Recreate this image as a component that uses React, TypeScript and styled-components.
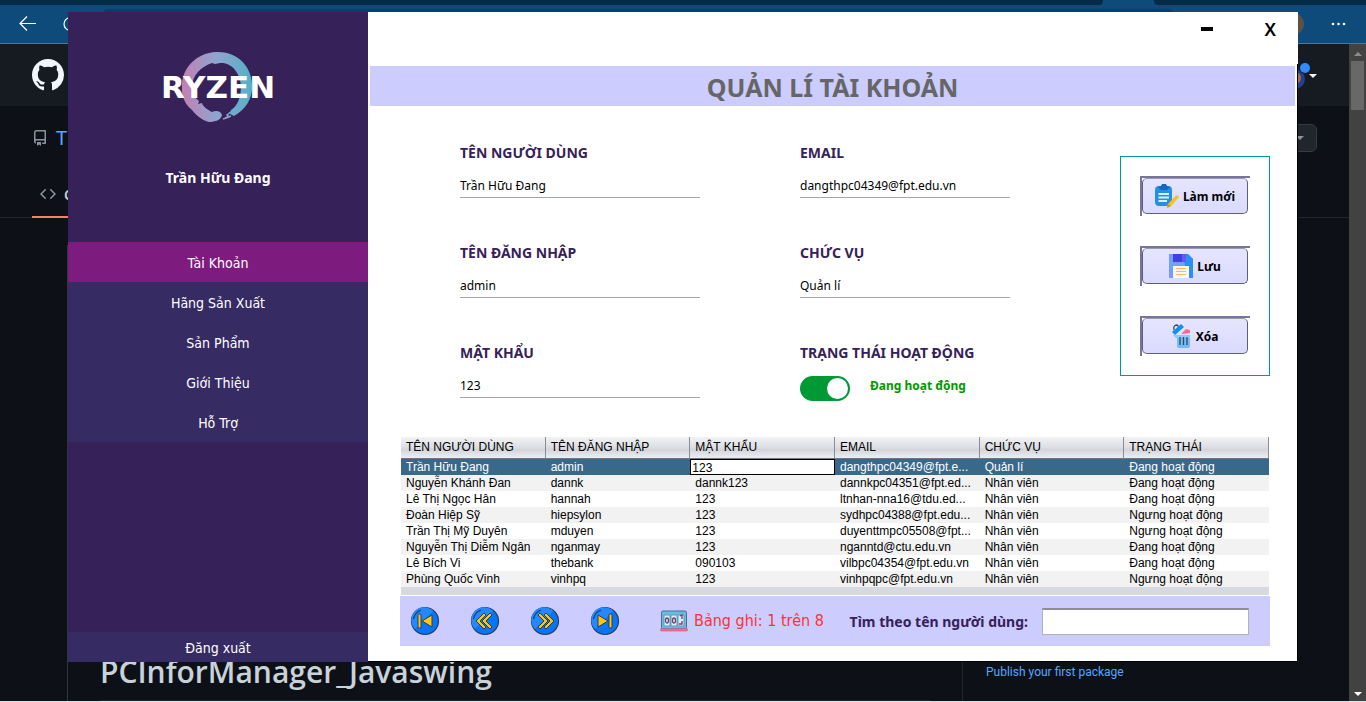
import React, { useState } from "react";
import styled, { createGlobalStyle, css } from "styled-components";

const uiFont = `"DejaVu Sans Condensed", "DejaVu Sans", sans-serif`;
const tahoma = `"Noto Sans", "Open Sans", sans-serif`;
const tableFont = `"Liberation Sans", Arial, sans-serif`;

const GlobalStyle = createGlobalStyle`
  *, *::before, *::after { box-sizing: border-box; }
  body { margin: 0; background: #0d1117; overflow: hidden; }
  button, input { font: inherit; }
`;

/* ---------- browser behind the application window ---------- */

const Desktop = styled.div`
  position: relative;
  display: flex;
  flex-direction: column;
  height: 100vh;
  background: #0d1117;
  border-bottom: 1px solid #d5e5e6;
  font-family: ${tahoma};
`;

const TabStrip = styled.div`
  display: flex;
  justify-content: space-between;
  flex: none;
  height: 5px;
  background: #0e4b7a;
`;

const TabGroup = styled.div<{ $side: "left" | "right" }>`
  background: #062b47;
  ${(p) =>
    p.$side === "left"
      ? css`flex: 1; margin-right: 51px; border-bottom-right-radius: 4px;`
      : css`width: 212px; border-bottom-left-radius: 4px;`}
`;

const AddressBar = styled.div`
  display: flex;
  align-items: center;
  gap: 24px;
  flex: none;
  height: 39px;
  padding: 0 20px 0 18px;
  background: #0e4b7a;
  border-bottom: 1px solid #48789c;
`;

const AddressField = styled.div`
  flex: 1;
  align-self: stretch;
  margin: 4px 84px 4px 0;
  border-radius: 6px;
  background: #0a3e66;
`;

const BrowserAvatar = styled.span`
  width: 22px;
  height: 22px;
  margin-right: 2px;
  border-radius: 50%;
  background: #5b5048;
`;

const PlainButton = styled.button`
  display: flex;
  align-items: center;
  padding: 0;
  border: 0;
  background: none;
  color: inherit;
  cursor: pointer;
`;

const Viewport = styled.div`
  display: flex;
  flex: 1;
  min-height: 0;
`;

const Page = styled.div`
  display: flex;
  flex-direction: column;
  flex: 1;
  min-width: 0;
`;

const GithubHeader = styled.header`
  display: flex;
  align-items: center;
  justify-content: space-between;
  flex: none;
  height: 62px;
  padding: 0 32px;
  background: #161b22;
  color: #f0f6fc;
`;

const RepoHeader = styled.div`
  display: flex;
  flex-direction: column;
  flex: none;
  height: 112px;
  border-bottom: 1px solid #21262d;
`;

const RepoTitle = styled.div`
  display: flex;
  align-items: center;
  justify-content: space-between;
  flex: none;
  height: 63px;
  padding: 0 32px;
  color: #8b949e;
`;

const RepoName = styled.a`
  display: flex;
  align-items: center;
  gap: 8px;
  color: #58a6ff;
  font-size: 20px;
  line-height: 28px;
  text-decoration: none;
  svg { color: #8b949e; }
`;

const ForkButton = styled.button`
  display: flex;
  align-items: center;
  justify-content: flex-end;
  width: 40px;
  height: 28px;
  padding: 0 12px 0 0;
  border: 1px solid #363b42;
  border-radius: 6px;
  background: #21262d;
`;

const Caret = styled.span<{ $color: string }>`
  border: 4px solid transparent;
  border-top-color: ${(p) => p.$color};
  border-bottom: 0;
`;

const RepoTab = styled.a`
  display: flex;
  align-items: center;
  gap: 8px;
  flex: none;
  width: 80px;
  height: 49px;
  margin-left: 32px;
  padding: 3px 0 0 8px;
  border-bottom: 2px solid #f78166;
  color: #c9d1d9;
  font-size: 14px;
  font-weight: 600;
  text-decoration: none;
  svg { color: #8b949e; }
`;

const RepoBody = styled.div`
  display: flex;
  flex: 1;
  margin: 27px 0 0 67px;
  border-left: 1px solid #30363d;
`;

const Readme = styled.div`
  display: flex;
  flex-direction: column;
  justify-content: flex-end;
  flex: 1;
  padding: 0 32px;
  border-right: 1px solid #21262d;
`;

const ReadmeTitle = styled.h1`
  margin: 0;
  padding-bottom: 8px;
  border-bottom: 1px solid #21262d;
  color: #c9d1d9;
  font-family: "Open Sans", "Noto Sans", sans-serif;
  font-size: 30px;
  font-weight: 600;
  line-height: 40px;
`;

const RepoAside = styled.aside`
  display: flex;
  align-items: flex-end;
  width: 386px;
  padding: 0 0 20px 23px;
`;

const PackageLink = styled.a`
  color: #58a6ff;
  font-family: Roboto, "Open Sans", sans-serif;
  font-size: 12px;
  line-height: 18px;
  text-decoration: none;
`;

const ScrollTrack = styled.div`
  display: flex;
  flex-direction: column;
  align-items: center;
  flex: none;
  width: 17px;
  padding: 8px 0 5px;
  background: #424242;
`;

const ScrollThumb = styled.div`
  flex: none;
  width: 13px;
  height: 49px;
  margin: 5px 0 auto;
  background: #686868;
`;

const ArrowUp = styled.span`
  border: 4px solid transparent;
  border-bottom-color: #8c8c8c;
  border-top: 0;
`;

/* ---------- application window ---------- */

const Window = styled.div`
  position: absolute;
  inset: 12px 68px 39px 68px;
  display: flex;
  font-family: ${uiFont};
`;

const Sidebar = styled.aside`
  display: flex;
  flex-direction: column;
  flex: none;
  width: 300px;
  background: #362159;
  color: #fff;
`;

const Brand = styled.div`
  display: flex;
  flex-direction: column;
  align-items: center;
  flex: none;
  height: 230px;
  padding-top: 38px;
`;

const Logo = styled.svg`
  display: block;
  width: 130px;
  height: 74px;
`;

const UserName = styled.div`
  margin-top: 44px;
  font-family: ${tahoma};
  font-size: 14px;
  font-weight: 700;
  line-height: 20px;
`;

const Menu = styled.nav`
  display: flex;
  flex-direction: column;
  flex: none;
`;

const MenuItem = styled.button<{ $active?: boolean; $last?: boolean }>`
  width: 100%;
  height: ${(p) => (p.$last ? 30 : 40)}px;
  margin-top: ${(p) => (p.$last ? "auto" : 0)};
  padding: 2px 0 0;
  border: 0;
  background: ${(p) => (p.$active ? "#7e1b7e" : "#372b63")};
  color: #fff;
  font-family: ${uiFont};
  font-size: 14px;
  cursor: pointer;
`;

const Main = styled.main`
  display: flex;
  flex-direction: column;
  flex: 1;
  min-width: 0;
  background: #fff;
`;

const WindowBar = styled.header`
  display: flex;
  justify-content: flex-end;
  align-items: flex-start;
  gap: 52px;
  flex: none;
  height: 52px;
  padding: 4px 22px 0 0;
`;

const WindowButton = styled.button`
  display: flex;
  align-items: center;
  justify-content: center;
  height: 26px;
  padding: 0;
  border: 0;
  background: none;
  color: #000;
  font-family: ${tahoma};
  font-size: 18px;
  font-weight: 600;
  line-height: 24px;
  cursor: pointer;
`;

const MinusBar = styled.span`
  width: 12px;
  height: 4px;
  background: #000;
`;

const Content = styled.div`
  display: flex;
  flex-direction: column;
  flex: 1;
  padding: 2px 0 0;
  border: solid #000;
  border-width: 0 1px 1px 0;
`;

const PageTitle = styled.h1`
  flex: none;
  height: 40px;
  margin: 0 2px;
  background: #ccccff;
  color: #666;
  font-family: ${tahoma};
  font-size: 25px;
  font-weight: 700;
  line-height: 42px;
  text-align: center;
`;

const Editor = styled.section`
  display: flex;
  align-items: flex-start;
  gap: 110px;
  padding: 37px 27px 0 92px;
`;

const Form = styled.form`
  display: grid;
  grid-template-columns: 24fr 21fr;
  grid-template-rows: 100px 100px 94px;
  column-gap: 100px;
  flex: 1;
`;

const Field = styled.div`
  display: flex;
  flex-direction: column;
  gap: 10px;
`;

const FieldLabel = styled.label`
  color: #362159;
  font-family: ${tahoma};
  font-size: 14px;
  font-weight: 700;
  line-height: 20px;
`;

const FieldInput = styled.input`
  width: 100%;
  height: 25px;
  padding: 0;
  border: 0;
  border-bottom: 1px solid #a3a6ad;
  outline: 0;
  background: transparent;
  color: #000;
  font-family: ${tahoma};
  font-size: 12px;
`;

const StatusRow = styled.div`
  display: flex;
  gap: 20px;
  padding-top: 3px;
`;

const Switch = styled.input`
  appearance: none;
  display: flex;
  align-items: center;
  width: 50px;
  height: 25px;
  margin: 0;
  padding: 0 2px;
  border-radius: 13px;
  background: #999;
  cursor: pointer;
  &::before {
    content: "";
    width: 21px;
    height: 21px;
    border-radius: 50%;
    background: #fff;
  }
  &:checked { justify-content: flex-end; background: #009933; }
`;

const StatusText = styled.output`
  color: #009900;
  font-family: ${tahoma};
  font-size: 12px;
  font-weight: 700;
  line-height: 20px;
`;

const Actions = styled.div`
  display: flex;
  flex-direction: column;
  gap: 30px;
  flex: none;
  width: 150px;
  margin-top: 13px;
  padding: 19px;
  border: 1px solid #009999;
`;

const ActionFrame = styled.div`
  display: flex;
  height: 40px;
  padding: 0 2px 2px 0;
  border: solid #77759a;
  border-width: 2px 0 0 2px;
`;

const ActionButton = styled.button`
  display: flex;
  align-items: center;
  justify-content: center;
  gap: 4px;
  flex: 1;
  height: 36px;
  padding: 0;
  border: 1px solid #5f5f73;
  border-top-color: #9a9aa8;
  border-radius: 5px;
  background: linear-gradient(#e6e5ff, #dadaff);
  color: #000;
  font-family: ${tahoma};
  font-size: 12px;
  font-weight: 700;
  white-space: nowrap;
  cursor: pointer;
`;

const Records = styled.section`
  padding: 0 28px 0 33px;
`;

const Table = styled.table`
  width: 100%;
  table-layout: fixed;
  border-collapse: separate;
  border-spacing: 0;
  border-bottom: 8px solid #d6d9df;
  color: #000;
  font-family: ${tableFont};
  font-size: 12px;
  line-height: 15px;
`;

const HeadCell = styled.th`
  height: 22px;
  padding: 0 0 0 5px;
  border-right: 1px solid #8a8d94;
  border-bottom: 1px solid #70757f;
  background: linear-gradient(#f3f3f5, #dcdee3 50%, #d3d5db 60%, #eceef3);
  font-weight: 400;
  text-align: left;
`;

const Row = styled.tr<{ $selected: boolean }>`
  height: 16px;
  &:nth-child(even) { background: #f2f2f2; }
  ${(p) => p.$selected && css`background: #39698a; color: #fff;`}
`;

const Cell = styled.td<{ $editing?: boolean }>`
  height: 16px;
  padding: ${(p) => (p.$editing ? "0" : "1px 0 0 5px")};
  overflow: hidden;
  white-space: nowrap;
`;

const CellInput = styled.input`
  display: block;
  width: 100%;
  height: 16px;
  padding: 1px 1px 0;
  border: 1px solid #000;
  outline: 0;
  background: #fff;
  color: #000;
`;

const Footer = styled.footer`
  display: flex;
  align-items: center;
  height: 50px;
  margin: 1px 27px 0 32px;
  padding: 0 21px 0 10px;
  background: #ccccff;
`;

const Pager = styled.div`
  display: flex;
  gap: 30px;
  margin-right: 40px;
`;

const RecordCount = styled.div`
  display: flex;
  align-items: center;
  gap: 6px;
  flex: 1;
  color: #ff3333;
  font-size: 16px;
  line-height: 20px;
  white-space: nowrap;
`;

const SearchLabel = styled.label`
  display: flex;
  align-items: center;
  gap: 14px;
  color: #362159;
  font-family: ${tahoma};
  font-size: 14px;
  font-weight: 700;
  white-space: nowrap;
`;

const SearchInput = styled.input`
  width: 207px;
  height: 27px;
  padding: 0 4px;
  border: 1px solid #b2b2b8;
  border-top: 2px solid #8d8d93;
  outline: 0;
  background: #fff;
`;

/* ---------- drawings ---------- */

const Octicon = ({ size = 16, d }: { size?: number; d: string }) => (
  <svg width={size} height={size} viewBox="0 0 16 16" fill="currentColor" aria-hidden="true">
    <path fillRule="evenodd" d={d} />
  </svg>
);

const githubMark =
  "M8 0C3.58 0 0 3.58 0 8c0 3.54 2.29 6.53 5.47 7.59.4.07.55-.17.55-.38 0-.19-.01-.82-.01-1.49-2.01.37-2.53-.49-2.69-.94-.09-.23-.48-.94-.82-1.13-.28-.15-.68-.52-.01-.53.63-.01 1.08.58 1.23.82.72 1.21 1.87.87 2.33.66.07-.52.28-.87.51-1.07-1.78-.2-3.64-.89-3.64-3.95 0-.87.31-1.59.82-2.15-.08-.2-.36-1.02.08-2.12 0 0 .67-.21 2.2.82.64-.18 1.32-.27 2-.27.68 0 1.36.09 2 .27 1.53-1.04 2.2-.82 2.2-.82.44 1.1.16 1.92.08 2.12.51.56.82 1.27.82 2.15 0 3.07-1.87 3.75-3.65 3.95.29.25.54.73.54 1.48 0 1.07-.01 1.93-.01 2.2 0 .21.15.46.55.38A8.013 8.013 0 0016 8c0-4.42-3.58-8-8-8z";

const repoMark =
  "M2 2.5A2.5 2.5 0 014.5 0h8.75a.75.75 0 01.75.75v12.5a.75.75 0 01-.75.75h-2.5a.75.75 0 110-1.5h1.75v-2h-8a1 1 0 00-.714 1.7.75.75 0 01-1.072 1.05A2.495 2.495 0 012 11.5v-9zm10.5-1V9h-8c-.356 0-.694.074-1 .208V2.5a1 1 0 011-1h8zM5 12.25v3.25a.25.25 0 00.4.2l1.45-1.087a.25.25 0 01.3 0L8.6 15.7a.25.25 0 00.4-.2v-3.25a.25.25 0 00-.25-.25h-3.5a.25.25 0 00-.25.25z";

const codeMark =
  "M4.72 3.22a.75.75 0 011.06 1.06L2.06 8l3.72 3.72a.75.75 0 11-1.06 1.06L.47 8.53a.75.75 0 010-1.06l4.25-4.25zm6.56 0a.75.75 0 10-1.06 1.06L13.94 8l-3.72 3.72a.75.75 0 101.06 1.06l4.25-4.25a.75.75 0 000-1.06l-4.25-4.25z";

const RyzenLogo = () => (
  <Logo viewBox="0 0 130 74" role="img" aria-label="Ryzen">
    <defs>
      <linearGradient id="ring" x1="0" x2="1">
        <stop offset="0" stopColor="#c47fb4" />
        <stop offset="0.5" stopColor="#8ea5d0" />
        <stop offset="1" stopColor="#55b0c6" />
      </linearGradient>
    </defs>
    <path
      fill="url(#ring)"
      d="M63 2C82 1 98 14 99 34C100 49 92 60 81 66L77 64L78 60C85 56 88 46 88 36C87 22 78 12 67 13L62 14L59 13C47 17 39 26 39 38C39 44 42 48 46 51L45 54L49 53C50 57 55 60 59 62C63 60 68 61 69 65C68 70 62 72 56 72C49 70 44 66 39 60C31 54 28 44 29 34C30 17 44 3 63 2Z"
    />
    <path
      d="M70 69L76 67L74 65L79 61M78 66L72 68"
      fill="none"
      stroke="url(#ring)"
      strokeWidth="1.5"
    />
    <text
      x="65"
      y="48"
      textAnchor="middle"
      fill="#fff"
      fontFamily="DejaVu Sans, sans-serif"
      fontWeight="700"
      fontSize="31"
    >
      RYZEN
    </text>
  </Logo>
);

const ClipboardIcon = () => (
  <svg width="24" height="24" viewBox="0 0 24 24" aria-hidden="true">
    <rect x="0" y="2" width="17" height="20" rx="4" fill="#2291e4" />
    <path d="M3 3L6 2L7 0H11L12 2L15 3L12 6H6Z" fill="#1666bd" />
    <path d="M3.5 10H14M3.5 13.500H14M3.5 17H12" stroke="#dff1ff" strokeWidth="1.8" />
    <path d="M12 24L13 20L21 11.500Q23 10.500 24 13L16 22Z" fill="#fdbf16" />
    <path d="M12 24L13 20L16 22Z" fill="#d39913" />
  </svg>
);

const SaveIcon = () => (
  <svg width="24" height="24" viewBox="0 0 24 24" aria-hidden="true">
    <path d="M0 0H19L24 5V24H0Z" fill="#70a0fa" />
    <path d="M14 0H19L24 5V24H18Z" fill="#2a90f8" />
    <path d="M4 0H17V8H4Z" fill="#4040df" />
    <path d="M13 0H17V8H13Z" fill="#6557f2" />
    <path d="M4 12H20V24H4Z" fill="#f6f6fb" />
    <path d="M7 14.500H17M7 17.500H17M7 20.500H17" stroke="#f9bd4d" />
  </svg>
);

const TrashIcon = () => (
  <svg width="20" height="24" viewBox="0 0 20 24" aria-hidden="true">
    <path d="M5 11H18V22Q18 24 16 24H7Q5 24 5 22Z" fill="#70bcff" />
    <path d="M2 6Q1 1 5 1L8 4" fill="none" stroke="#394553" strokeWidth="1.3" />
    <path d="M0 8L9 0L12 3L3 11Z" fill="#128ef5" />
    <path d="M10 9L14 5L18 6V9L10 10Z" fill="#ff6891" />
    <path d="M1 11H18V14H4Z" fill="#8acaff" />
    <path d="M8 13V21M11.500 13V21M15 13V21" stroke="#34495c" strokeWidth="1.3" />
  </svg>
);

const CounterIcon = () => (
  <svg width="28" height="22" viewBox="0 0 28 22" aria-hidden="true">
    <rect x="1.5" y="1" width="25" height="18" rx="1.5" fill="#61bfe3" stroke="#536b87" />
    <path d="M4 5H10V16H4ZM11 5H17V16H11ZM18 5H24V16H18Z" fill="#d8f0fb" stroke="#6d93ae" />
    <ellipse cx="7" cy="10.5" rx="1.5" ry="2.5" fill="none" stroke="#70416e" strokeWidth="1.3" />
    <ellipse cx="14" cy="10.5" rx="1.5" ry="2.5" fill="none" stroke="#70416e" strokeWidth="1.3" />
    <path d="M20 6L22 5V9M19 14H22V11" fill="none" stroke="#70416e" strokeWidth="1.3" />
    <rect x="0.5" y="18.5" width="27" height="2.5" rx="1" fill="#fa6a92" stroke="#a5618a" strokeWidth="0.6" />
  </svg>
);

const pagerShapes = {
  first: (
    <>
      <rect x="7" y="7" width="3" height="14" rx="1" />
      <path d="M21 8V20L11 14Z" />
    </>
  ),
  prev: (
    <path d="M13 6L15 8L9 14L15 20L13 22L5 14ZM19 6L21 8L15 14L21 20L19 22L11 14Z" />
  ),
  next: (
    <path d="M15 6L13 8L19 14L13 20L15 22L23 14ZM9 6L7 8L13 14L7 20L9 22L17 14Z" />
  ),
  last: (
    <>
      <rect x="18" y="7" width="3" height="14" rx="1" />
      <path d="M7 8V20L17 14Z" />
    </>
  ),
};

const PagerIcon = ({ kind }: { kind: keyof typeof pagerShapes }) => (
  <svg width="30" height="30" viewBox="-1 -1 30 30" aria-hidden="true">
    <circle cx="14" cy="14" r="13.5" fill="#0874f8" stroke="#28415f" strokeWidth="1.2" />
    <path d="M4 22A12.5 12.5 0 0 1 22 4Z" fill="#2588ff" />
    <path d="M2.5 12A12 12 0 0 1 10 3" fill="none" stroke="#173f71" strokeWidth="1.2" />
    <g fill="#ffc60c" stroke="#263e58" strokeWidth="1">
      {pagerShapes[kind]}
    </g>
  </svg>
);

/* ---------- data ---------- */

const menuItems = ["Tài Khoản", "Hãng Sản Xuất", "Sản Phẩm", "Giới Thiệu", "Hỗ Trợ"];

const columns = ["TÊN NGƯỜI DÙNG", "TÊN ĐĂNG NHẬP", "MẬT KHẨU", "EMAIL", "CHỨC VỤ", "TRẠNG THÁI"];

const on = "Đang hoạt động";
const off = "Ngưng hoạt động";

const accounts = [
  ["Trần Hữu Đang", "admin", "123", "dangthpc04349@fpt.e...", "Quản lí", on],
  ["Nguyễn Khánh Đan", "dannk", "dannk123", "dannkpc04351@fpt.ed...", "Nhân viên", on],
  ["Lê Thị Ngọc Hân", "hannah", "123", "ltnhan-nna16@tdu.ed...", "Nhân viên", on],
  ["Đoàn Hiệp Sỹ", "hiepsylon", "123", "sydhpc04388@fpt.edu...", "Nhân viên", off],
  ["Trần Thị Mỹ Duyên", "mduyen", "123", "duyenttmpc05508@fpt...", "Nhân viên", off],
  ["Nguyễn Thị Diễm Ngân", "nganmay", "123", "nganntd@ctu.edu.vn", "Nhân viên", on],
  ["Lê Bích Vi", "thebank", "090103", "vilbpc04354@fpt.edu.vn", "Nhân viên", on],
  ["Phùng Quốc Vinh", "vinhpq", "123", "vinhpqpc@fpt.edu.vn", "Nhân viên", off],
];

const TextField = ({ id, label, value }: { id: string; label: string; value: string }) => (
  <Field>
    <FieldLabel htmlFor={id}>{label}</FieldLabel>
    <FieldInput id={id} defaultValue={value} />
  </Field>
);

const Action = ({ icon, children }: { icon: React.ReactNode; children: string }) => (
  <ActionFrame>
    <ActionButton type="button">
      {icon}
      {children}
    </ActionButton>
  </ActionFrame>
);

const Browser = () => (
  <>
    <TabStrip>
      <TabGroup $side="left" />
      <TabGroup $side="right" />
    </TabStrip>
    <AddressBar>
      <PlainButton aria-label="Back">
        <svg width="20" height="20" viewBox="0 0 20 20" fill="none" stroke="#fff" strokeWidth="1.2">
          <path d="M18 9.5H2M9 2.5L2 9.5L9 16.5" />
        </svg>
      </PlainButton>
      <PlainButton aria-label="Reload">
        <svg width="16" height="16" viewBox="0 0 16 16" fill="none" stroke="#fff" strokeWidth="1.2">
          <circle cx="8.5" cy="8" r="6.5" />
        </svg>
      </PlainButton>
      <AddressField />
      <BrowserAvatar />
      <PlainButton aria-label="More">
        <svg width="16" height="4" viewBox="0 0 16 4" fill="#fff">
          <circle cx="3" cy="2" r="1.3" />
          <circle cx="8.5" cy="2" r="1.3" />
          <circle cx="14" cy="2" r="1.3" />
        </svg>
      </PlainButton>
    </AddressBar>
    <Viewport>
      <Page>
        <GithubHeader>
          <Octicon size={32} d={githubMark} />
          <svg width="34" height="32" viewBox="0 0 34 32" aria-hidden="true">
            <circle cx="12" cy="20" r="10" fill="#243f8f" />
            <circle cx="12" cy="19" r="6" fill="#a8694a" />
            <circle cx="22" cy="9" r="6" fill="#161b22" />
            <circle cx="22" cy="9" r="5" fill="#2f8bff" />
            <path d="M26 15H34L30 19Z" fill="#f0f6fc" />
          </svg>
        </GithubHeader>
        <RepoHeader>
          <RepoTitle>
            <RepoName href="#owner">
              <Octicon d={repoMark} />
              <span>T</span>
            </RepoName>
            <ForkButton aria-label="Fork options">
              <Caret $color="#8b949e" />
            </ForkButton>
          </RepoTitle>
          <RepoTab href="#code">
            <Octicon d={codeMark} />
            <span>C</span>
          </RepoTab>
        </RepoHeader>
        <RepoBody>
          <Readme>
            <ReadmeTitle>PCInforManager_Javaswing</ReadmeTitle>
          </Readme>
          <RepoAside>
            <PackageLink href="#packages">Publish your first package</PackageLink>
          </RepoAside>
        </RepoBody>
      </Page>
      <ScrollTrack>
        <ArrowUp />
        <ScrollThumb />
        <Caret $color="#fff" />
      </ScrollTrack>
    </Viewport>
  </>
);

export default function App() {
  const [active, setActive] = useState(true);
  const [section, setSection] = useState(0);
  const [query, setQuery] = useState("");

  return (
    <>
      <GlobalStyle />
      <Desktop>
        <Browser />
        <Window>
          <Sidebar>
            <Brand>
              <RyzenLogo />
              <UserName>Trần Hữu Đang</UserName>
            </Brand>
            <Menu>
              {menuItems.map((item, i) => (
                <MenuItem key={item} $active={i === section} onClick={() => setSection(i)}>
                  {item}
                </MenuItem>
              ))}
            </Menu>
            <MenuItem $last>Đăng xuất</MenuItem>
          </Sidebar>
          <Main>
            <WindowBar>
              <WindowButton aria-label="Minimize">
                <MinusBar />
              </WindowButton>
              <WindowButton aria-label="Close">X</WindowButton>
            </WindowBar>
            <Content>
              <PageTitle>QUẢN LÍ TÀI KHOẢN</PageTitle>
              <Editor>
                <Form>
                  <TextField id="name" label="TÊN NGƯỜI DÙNG" value="Trần Hữu Đang" />
                  <TextField id="email" label="EMAIL" value="dangthpc04349@fpt.edu.vn" />
                  <TextField id="login" label="TÊN ĐĂNG NHẬP" value="admin" />
                  <TextField id="role" label="CHỨC VỤ" value="Quản lí" />
                  <TextField id="password" label="MẬT KHẨU" value="123" />
                  <Field>
                    <FieldLabel htmlFor="status">TRẠNG THÁI HOẠT ĐỘNG</FieldLabel>
                    <StatusRow>
                      <Switch
                        id="status"
                        type="checkbox"
                        checked={active}
                        onChange={(e) => setActive(e.target.checked)}
                      />
                      <StatusText htmlFor="status">{active ? on : off}</StatusText>
                    </StatusRow>
                  </Field>
                </Form>
                <Actions>
                  <Action icon={<ClipboardIcon />}>Làm mới</Action>
                  <Action icon={<SaveIcon />}>Lưu</Action>
                  <Action icon={<TrashIcon />}>Xóa</Action>
                </Actions>
              </Editor>
              <Records>
                <Table>
                  <thead>
                    <tr>
                      {columns.map((column) => (
                        <HeadCell key={column} scope="col">
                          {column}
                        </HeadCell>
                      ))}
                    </tr>
                  </thead>
                  <tbody>
                    {accounts.map((account, r) => (
                      <Row key={account[0]} $selected={r === 0}>
                        {account.map((text, c) =>
                          r === 0 && c === 2 ? (
                            <Cell key={c} $editing>
                              <CellInput aria-label="Mật khẩu" defaultValue={text} />
                            </Cell>
                          ) : (
                            <Cell key={c}>{text}</Cell>
                          )
                        )}
                      </Row>
                    ))}
                  </tbody>
                </Table>
              </Records>
              <Footer>
                <Pager>
                  <PlainButton aria-label="First record"><PagerIcon kind="first" /></PlainButton>
                  <PlainButton aria-label="Previous record"><PagerIcon kind="prev" /></PlainButton>
                  <PlainButton aria-label="Next record"><PagerIcon kind="next" /></PlainButton>
                  <PlainButton aria-label="Last record"><PagerIcon kind="last" /></PlainButton>
                </Pager>
                <RecordCount>
                  <CounterIcon />
                  <span>Bảng ghi: 1 trên 8</span>
                </RecordCount>
                <SearchLabel>
                  Tìm theo tên người dùng:
                  <SearchInput value={query} onChange={(e) => setQuery(e.target.value)} />
                </SearchLabel>
              </Footer>
            </Content>
          </Main>
        </Window>
      </Desktop>
    </>
  );
}
